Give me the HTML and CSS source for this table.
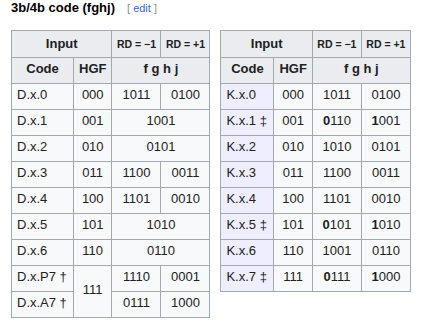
FILE: index.html
```html
<!DOCTYPE html>
<html lang="en">
<head>
<meta charset="utf-8">
<title>3b/4b code (fghj)</title>
<link rel="stylesheet" href="styles.css">
</head>
<body>
<div class="page">
  <h3 class="heading"><span class="headline">3b/4b code (fghj)</span><span class="editsection"><span class="bracket">[</span> <a class="editlink" href="#">edit</a> <span class="bracket">]</span></span></h3>
  <div class="tables">
    <table class="wikitable data-table">
      <colgroup><col class="c-code-d"><col class="c-hgf"><col class="c-bits"><col class="c-bits"></colgroup>
      <tr class="hrow1"><th colspan="2">Input</th><th class="rd">RD = −1</th><th class="rd">RD = +1</th></tr>
      <tr class="hrow2"><th>Code</th><th>HGF</th><th colspan="2">f g h j</th></tr>
      <tr><td class="code">D.x.0</td><td>000</td><td>1011</td><td>0100</td></tr>
      <tr><td class="code">D.x.1</td><td>001</td><td colspan="2">1001</td></tr>
      <tr><td class="code">D.x.2</td><td>010</td><td colspan="2">0101</td></tr>
      <tr><td class="code">D.x.3</td><td>011</td><td>1100</td><td>0011</td></tr>
      <tr><td class="code">D.x.4</td><td>100</td><td>1101</td><td>0010</td></tr>
      <tr><td class="code">D.x.5</td><td>101</td><td colspan="2">1010</td></tr>
      <tr><td class="code">D.x.6</td><td>110</td><td colspan="2">0110</td></tr>
      <tr><td class="code">D.x.P7 †</td><td rowspan="2">111</td><td>1110</td><td>0001</td></tr>
      <tr><td class="code">D.x.A7 †</td><td>0111</td><td>1000</td></tr>
    </table>
    <table class="wikitable data-table">
      <colgroup><col class="c-code-k"><col class="c-hgf"><col class="c-bits"><col class="c-bits"></colgroup>
      <tr class="hrow1"><th colspan="2">Input</th><th class="rd">RD = −1</th><th class="rd">RD = +1</th></tr>
      <tr class="hrow2"><th>Code</th><th>HGF</th><th colspan="2">f g h j</th></tr>
      <tr><td class="code k">K.x.0</td><td>000</td><td>1011</td><td>0100</td></tr>
      <tr><td class="code k">K.x.1 ‡</td><td>001</td><td><b>0</b>110</td><td><b>1</b>001</td></tr>
      <tr><td class="code k">K.x.2</td><td>010</td><td>1010</td><td>0101</td></tr>
      <tr><td class="code k">K.x.3</td><td>011</td><td>1100</td><td>0011</td></tr>
      <tr><td class="code k">K.x.4</td><td>100</td><td>1101</td><td>0010</td></tr>
      <tr><td class="code k">K.x.5 ‡</td><td>101</td><td><b>0</b>101</td><td><b>1</b>010</td></tr>
      <tr><td class="code k">K.x.6</td><td>110</td><td>1001</td><td>0110</td></tr>
      <tr><td class="code k">K.x.7 ‡</td><td>111</td><td><b>0</b>111</td><td><b>1</b>000</td></tr>
    </table>
  </div>
</div>
</body>
</html>
```
FILE: styles.css
```css
html, body {
  margin: 0;
  padding: 0;
  background: #ffffff;
}

.page {
  padding: 0 0 0 11px;
  font-family: "Liberation Sans", Arial, sans-serif;
  color: #202122;
}

.heading {
  margin: 0 0 14px 0;
  font-size: 13px;
  line-height: 16px;
  font-weight: bold;
  color: #000000;
}

.editsection {
  margin-left: 12px;
  font-size: 11px;
  font-weight: normal;
}

.bracket {
  color: #8a8f94;
}

.editlink {
  color: #3366cc;
  text-decoration: none;
}

.tables {
  display: flex;
  align-items: flex-start;
  gap: 10px;
}

.wikitable {
  border-collapse: collapse;
  table-layout: fixed;
  background: #f8f9fa;
  color: #202122;
  font-size: 13px;
  border: 1px solid #a2a9b1;
}

.wikitable th,
.wikitable td {
  border: 1px solid #a2a9b1;
  padding: 1px 5px 4px;
  line-height: 20px;
  text-align: center;
  vertical-align: middle;
  white-space: nowrap;
  overflow: hidden;
}

.wikitable th {
  background: #eaecf0;
  font-weight: bold;
}

.wikitable .hrow1 th {
  padding-top: 3px;
  padding-bottom: 3px;
}

.wikitable th.rd {
  font-size: 10.5px;
  padding-left: 2px;
  padding-right: 2px;
}

.wikitable td.code {
  text-align: left;
}

.wikitable td.k {
  background: #eeeeff;
}

.c-code-d { width: 62px; }
.c-code-k { width: 53px; }
.c-hgf { width: 38px; }
.c-bits { width: 49px; }
```
